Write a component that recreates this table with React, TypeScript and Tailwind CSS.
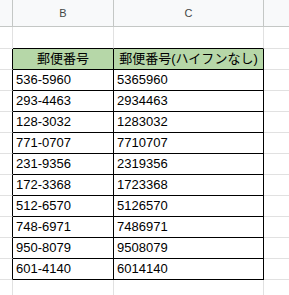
import React from 'react';

const rows = [
  ['536-5960', '5365960'],
  ['293-4463', '2934463'],
  ['128-3032', '1283032'],
  ['771-0707', '7710707'],
  ['231-9356', '2319356'],
  ['172-3368', '1723368'],
  ['512-6570', '5126570'],
  ['748-6971', '7486971'],
  ['950-8079', '9508079'],
  ['601-4140', '6014140'],
];

const font = { fontFamily: '"Liberation Sans", Arial, "Noto Sans CJK JP", sans-serif' };

export default function App() {
  return (
    <div className="w-[289px] h-[295px] overflow-hidden bg-white text-[13px] text-black" style={font}>
      {/* column letters */}
      <div className="flex h-[27px] bg-[#f8f9fa] border-b border-[#c4c7c5] text-[11px] text-[#444746]">
        <div className="w-[13px] border-r border-[#c4c7c5]" />
        <div className="w-[101px] border-r border-[#c4c7c5] flex items-center justify-center">B</div>
        <div className="w-[150px] border-r border-[#c4c7c5] flex items-center justify-center">C</div>
        <div className="flex-1" />
      </div>

      {/* row 1, empty */}
      <div className="flex h-[22px]">
        <div className="w-[13px] border-r border-b border-[#e1e1e1]" />
        <div className="w-[101px] border-r border-[#e1e1e1] border-b-black border-b" />
        <div className="w-[150px] border-r border-[#e1e1e1] border-b-black border-b" />
        <div className="flex-1 border-b border-[#e1e1e1]" />
      </div>

      {/* table header */}
      <div className="flex h-[21px]">
        <div className="w-[13px] border-b border-b-[#e1e1e1] border-r border-r-black" />
        <div className="w-[101px] border-r border-b border-black bg-[#b6d7a8] flex items-center justify-center">
          郵便番号
        </div>
        <div className="w-[150px] border-r border-b border-black bg-[#b6d7a8] flex items-center justify-center whitespace-nowrap">
          郵便番号(ハイフンなし)
        </div>
        <div className="flex-1 border-b border-[#e1e1e1]" />
      </div>

      {rows.map(([a, b]) => (
        <div key={a} className="flex h-[21px]">
          <div className="w-[13px] border-b border-b-[#e1e1e1] border-r border-r-black" />
          <div className="w-[101px] border-r border-b border-black flex items-center pl-[3px]">{a}</div>
          <div className="w-[150px] border-r border-b border-black flex items-center pl-[3px]">{b}</div>
          <div className="flex-1 border-b border-[#e1e1e1]" />
        </div>
      ))}

      <div className="flex h-[21px]">
        <div className="w-[13px] border-r border-b border-[#e1e1e1]" />
        <div className="w-[101px] border-r border-b border-[#e1e1e1]" />
        <div className="w-[150px] border-r border-b border-[#e1e1e1]" />
        <div className="flex-1 border-b border-[#e1e1e1]" />
      </div>
    </div>
  );
}
